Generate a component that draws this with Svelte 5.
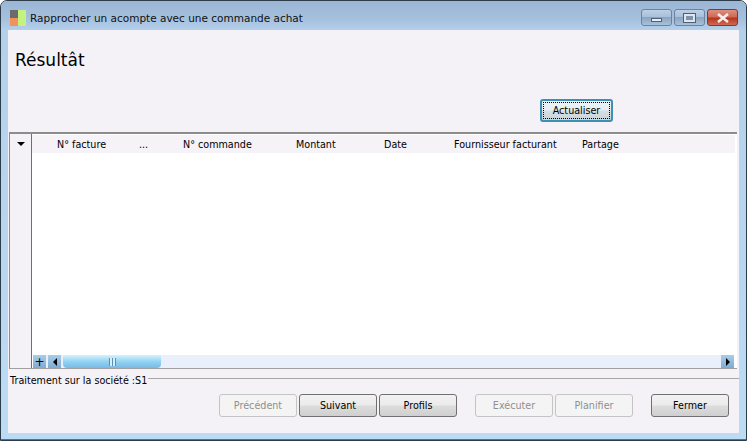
<script>
    const columns = [
        { label: 'N° facture', width: 82 },
        { label: '...', width: 44 },
        { label: 'N° commande', width: 113 },
        { label: 'Montant', width: 88 },
        { label: 'Date', width: 70 },
        { label: 'Fournisseur facturant', width: 128 },
        { label: 'Partage', width: 80 }
    ];
</script>

<div class="window">
    <div class="titlebar">
        <div class="app-icon">
            <span class="dark"></span>
            <span class="orange"></span>
        </div>
        <div class="title">Rapprocher un acompte avec une commande achat</div>
        <div class="controls">
            <div class="ctl"><span class="min"></span></div>
            <div class="ctl"><span class="max"></span></div>
            <div class="ctl close">
                <svg width="14" height="10" viewBox="0 0 14 10">
                    <path d="M2 1 L12 9 M12 1 L2 9" stroke="#f4efec" stroke-width="2.6" fill="none" />
                </svg>
            </div>
        </div>
    </div>

    <div class="client">
        <h1>Résultât</h1>
        <div class="refresh-row">
            <button class="btn focused"><span>Actualiser</span></button>
        </div>

        <div class="grid">
            <div class="gutter">
                <div class="arrow-cell"><span class="arrow"></span></div>
            </div>
            <div class="grid-main">
                <div class="head">
                    {#each columns as col}
                        <div class="col" style="width:{col.width}px">{col.label}</div>
                    {/each}
                </div>
                <div class="rows"></div>
                <div class="hscroll">
                    <div class="sb-btn plus">+</div>
                    <div class="sb-btn back"><span class="tri left"></span></div>
                    <div class="thumb"><span class="grip"></span></div>
                    <div class="sb-track"></div>
                    <div class="sb-btn"><span class="tri right"></span></div>
                </div>
            </div>
        </div>

        <div class="status">
            <span>Traitement sur la société :S1</span>
            <div class="rule"></div>
        </div>

        <div class="footer">
            <button class="btn" disabled>Précédent</button>
            <button class="btn">Suivant</button>
            <button class="btn">Profils</button>
            <div class="spacer"></div>
            <button class="btn" disabled>Exécuter</button>
            <button class="btn" disabled>Planifier</button>
            <div class="spacer"></div>
            <button class="btn">Fermer</button>
        </div>
    </div>
</div>

<style>
    :global(body) {
        margin: 0;
        background: #fff;
    }

    .window {
        box-sizing: border-box;
        width: 747px;
        height: 441px;
        display: flex;
        flex-direction: column;
        padding: 0 7px 7px 7px;
        border: 1px solid #2c3c48;
        border-radius: 7px 7px 0 0;
        box-shadow: inset 0 -1px 0 #2f7fa6;
        background: linear-gradient(180deg, #b4cfea 0, #b9d6f1 60%, #bcdcf5 100%);
        font-family: "DejaVu Sans", sans-serif;
        font-size: 9.6px;
        color: #000;
        overflow: hidden;
    }

    .titlebar {
        box-sizing: border-box;
        height: 29px;
        flex: none;
        display: flex;
        align-items: center;
        margin: 0 -7px;
        padding: 4px 8px 0 9px;
        background: linear-gradient(180deg, #9cb7d6 0, #a5c0dd 60%, #b4cfea 100%);
    }

    .app-icon {
        position: relative;
        width: 16px;
        height: 16px;
        background: #c3f27e;
        flex: none;
    }

    .app-icon span {
        position: absolute;
        left: 0;
        width: 8px;
    }

    .app-icon .dark {
        top: 0;
        height: 8px;
        background: #6b6b6b;
    }

    .app-icon .orange {
        top: 8px;
        height: 8px;
        background: #f0925a;
    }

    .title {
        margin-left: 4px;
        flex: 1;
        font-size: 10.5px;
        color: #111;
    }

    .controls {
        display: flex;
        gap: 2px;
    }

    .ctl {
        box-sizing: border-box;
        width: 31px;
        height: 17px;
        border: 1px solid #6f829a;
        border-radius: 3px;
        background: linear-gradient(180deg, #bcd0e6 0, #a9c0da 45%, #8aa4c2 50%, #a8c2dc 100%);
        display: flex;
        align-items: center;
        justify-content: center;
    }

    .ctl.close {
        border-color: #7a3b30;
        background: linear-gradient(180deg, #dc8f7f 0, #cf6a55 45%, #b8351f 55%, #cf6a55 100%);
    }

    .min {
        width: 9px;
        height: 2px;
        margin-top: 5px;
        background: #e8eef5;
        border: 1px solid #4f5f74;
    }

    .max {
        box-sizing: border-box;
        width: 11px;
        height: 8px;
        border: 2px solid #dfe5ec;
        outline: 1px solid #4f5f74;
        background: #7f93ab;
    }

    .client {
        flex: 1;
        min-height: 0;
        display: flex;
        flex-direction: column;
        background: #f5f2f7;
    }

    h1 {
        margin: 21px 0 0 7px;
        height: 19px;
        line-height: 19px;
        font-size: 17px;
        font-weight: 400;
    }

    .refresh-row {
        display: flex;
        margin: 29px 0 0 532px;
    }

    .btn {
        box-sizing: border-box;
        width: 78px;
        height: 23px;
        padding: 0;
        border: 1px solid #707070;
        border-radius: 3px;
        background: linear-gradient(180deg, #f2f2f2 0, #ebebeb 48%, #dddddd 52%, #cfcfcf 100%);
        font: inherit;
        color: #000;
    }

    .btn:disabled {
        border-color: #c4c4c4;
        background: #f4f4f4;
        color: #8f8f8f;
    }

    .btn.focused {
        width: 73px;
        border: 2px solid #3c8fb5;
        background: linear-gradient(180deg, #eef4f7 0, #e6eef2 48%, #d6dfe4 52%, #c8d3d8 100%);
    }

    .btn.focused span {
        display: block;
        margin: 1px;
        line-height: 15px;
        border: 1px dotted #000;
    }

    .grid {
        flex: none;
        height: 234px;
        margin: 10px 2px 0 1px;
        display: flex;
        border-top: 2px solid #8c8c8c;
        border-left: 1px solid #8c8c8c;
        border-bottom: 1px solid #a0a0a0;
        background: #fff;
    }

    .gutter {
        box-sizing: border-box;
        width: 22px;
        flex: none;
        background: #f5f2f7;
        border-right: 1px solid #6f6f6f;
    }

    .arrow-cell {
        height: 18px;
        display: flex;
        align-items: center;
        justify-content: center;
        padding-top: 1px;
    }

    .arrow {
        width: 0;
        height: 0;
        border-left: 4px solid transparent;
        border-right: 4px solid transparent;
        border-top: 4px solid #000;
    }

    .grid-main {
        flex: 1;
        min-width: 0;
        display: flex;
        flex-direction: column;
    }

    .head {
        box-sizing: border-box;
        height: 18px;
        margin: 1px 2px 0 0;
        display: flex;
        align-items: center;
        padding: 1px 0 0 25px;
        background: #f5f2f8;
    }

    .col {
        flex: none;
        white-space: nowrap;
    }

    .rows {
        flex: 1;
    }

    .hscroll {
        height: 13px;
        display: flex;
        margin: 0 3px 0 1px;
        background: #e9f0fb;
    }

    .sb-btn {
        width: 13px;
        flex: none;
        display: flex;
        align-items: center;
        justify-content: center;
        background: linear-gradient(180deg, #a9cdea, #7faad2);
        font-size: 12px;
        line-height: 12px;
    }

    .sb-btn.plus,
    .sb-btn.back {
        margin-right: 2px;
    }

    .tri {
        width: 0;
        height: 0;
        border-top: 4px solid transparent;
        border-bottom: 4px solid transparent;
    }

    .tri.left {
        border-right: 4px solid #000;
    }

    .tri.right {
        border-left: 4px solid #000;
    }

    .thumb {
        width: 98px;
        flex: none;
        display: flex;
        align-items: center;
        justify-content: center;
        border-radius: 0 0 4px 4px;
        background: linear-gradient(180deg, #d8f1fc 0, #8fd4f3 50%, #7cb8e8 100%);
    }

    .grip {
        width: 7px;
        height: 8px;
        background: repeating-linear-gradient(90deg, #5a8fb5 0 1px, #d8eefa 1px 3px);
    }

    .sb-track {
        flex: 1;
    }

    .status {
        display: flex;
        align-items: center;
        gap: 1px;
        height: 16px;
        margin: 3px 0 0 2px;
        white-space: nowrap;
    }

    .rule {
        flex: 1;
        height: 1px;
        margin-top: -3px;
        background: #a8a8a8;
    }

    .footer {
        display: flex;
        gap: 2px;
        margin: 6px 0 0 211px;
    }

    .spacer {
        width: 14px;
    }
</style>
